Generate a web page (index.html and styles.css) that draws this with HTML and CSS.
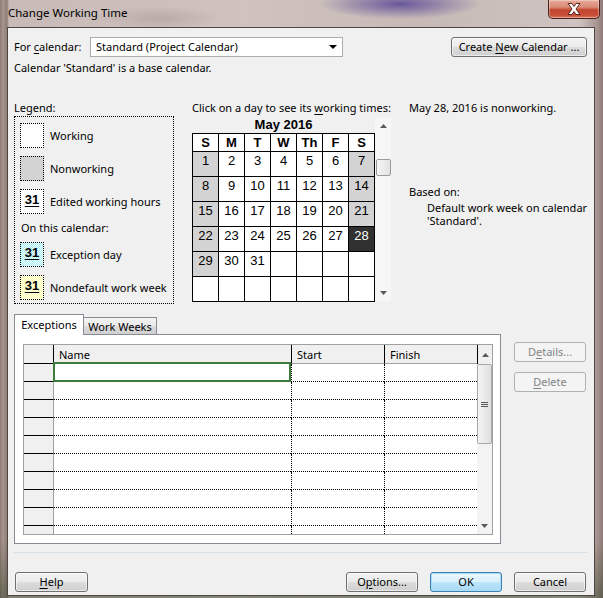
FILE: index.html
```html
<!DOCTYPE html>
<html>
<head>
<meta charset="utf-8">
<title>Change Working Time</title>
<link rel="stylesheet" href="styles.css">
</head>
<body>
<div class="window">
  <div class="titlebar">
    <span class="title">Change Working Time</span>
    <div class="close">
      <svg width="18" height="12" viewBox="0 0 18 12">
        <path d="M3 0.5 L7 0.5 L9 3.5 L11 0.5 L15 0.5 L11 6 L15 11.5 L11 11.5 L9 8.5 L7 11.5 L3 11.5 L7 6 Z" fill="#fff" stroke="#5a2a22" stroke-width="1"/>
      </svg>
    </div>
  </div>
  <div class="client">
    <div class="row1">
      <span class="lbl">For <u>c</u>alendar:</span>
      <div class="combo"><span>Standard (Project Calendar)</span><span class="caret"></span></div>
      <button class="btn create">Create <u>N</u>ew Calendar ...</button>
    </div>
    <div class="note">Calendar 'Standard' is a base calendar.</div>

    <div class="main">
      <div class="legend-col">
        <div class="cap">Legend:</div>
        <div class="legend">
          <div class="item"><span class="sw"></span><span>Working</span></div>
          <div class="item"><span class="sw nonwork"></span><span>Nonworking</span></div>
          <div class="item"><span class="sw"><b>31</b></span><span>Edited working hours</span></div>
          <div class="sub">On this calendar:</div>
          <div class="item"><span class="sw exc"><b>31</b></span><span>Exception day</span></div>
          <div class="item"><span class="sw nondef"><b>31</b></span><span>Nondefault work week</span></div>
        </div>
      </div>

      <div class="cal-col">
        <div class="cap">Click on a day to see its <u>w</u>orking times:</div>
        <div class="cal-wrap">
          <div class="cal">
            <div class="month">May 2016</div>
            <div class="days">
              <div class="hd">S</div><div class="hd">M</div><div class="hd">T</div><div class="hd">W</div><div class="hd">Th</div><div class="hd">F</div><div class="hd">S</div>
              <div class="we">1</div><div>2</div><div>3</div><div>4</div><div>5</div><div>6</div><div class="we">7</div>
              <div class="we">8</div><div>9</div><div>10</div><div>11</div><div>12</div><div>13</div><div class="we">14</div>
              <div class="we">15</div><div>16</div><div>17</div><div>18</div><div>19</div><div>20</div><div class="we">21</div>
              <div class="we">22</div><div>23</div><div>24</div><div>25</div><div>26</div><div>27</div><div class="sel">28</div>
              <div class="we">29</div><div>30</div><div>31</div><div></div><div></div><div></div><div></div>
              <div></div><div></div><div></div><div></div><div></div><div></div><div></div>
            </div>
          </div>
          <div class="cscroll">
            <div class="arr"><svg width="7" height="4" viewBox="0 0 7 4"><path d="M0 4 L3.5 0 L7 4 Z" fill="#5a5a5a"/></svg></div>
            <div class="cthumb"></div>
            <div class="ctrack"></div>
            <div class="arr"><svg width="7" height="4" viewBox="0 0 7 4"><path d="M0 0 L7 0 L3.5 4 Z" fill="#5a5a5a"/></svg></div>
          </div>
        </div>
      </div>

      <div class="info-col">
        <div class="cap">May 28, 2016 is nonworking.</div>
        <div class="based">Based on:</div>
        <div class="based-txt">
          <div>Default work week on calendar</div>
          <div>'Standard'.</div>
        </div>
      </div>
    </div>

    <div class="lower">
      <div class="tabs-col">
        <div class="tabs">
          <div class="tab active">Exceptions</div>
          <div class="tab">Work Weeks</div>
        </div>
        <div class="panel">
          <div class="xgrid">
            <div class="xtable">
              <div class="hc rhh"></div><div class="hc">Name</div><div class="hc">Start</div><div class="hc">Finish</div>
              <div class="rh"></div><div class="c name sel"></div><div class="c dl"></div><div class="c dl"></div>
              <div class="rh"></div><div class="c name"></div><div class="c dl"></div><div class="c dl"></div>
              <div class="rh"></div><div class="c name"></div><div class="c dl"></div><div class="c dl"></div>
              <div class="rh"></div><div class="c name"></div><div class="c dl"></div><div class="c dl"></div>
              <div class="rh"></div><div class="c name"></div><div class="c dl"></div><div class="c dl"></div>
              <div class="rh"></div><div class="c name"></div><div class="c dl"></div><div class="c dl"></div>
              <div class="rh"></div><div class="c name"></div><div class="c dl"></div><div class="c dl"></div>
              <div class="rh"></div><div class="c name"></div><div class="c dl"></div><div class="c dl"></div>
              <div class="rh"></div><div class="c name"></div><div class="c dl"></div><div class="c dl"></div>
              <div class="rh"></div><div class="c name"></div><div class="c dl"></div><div class="c dl"></div>
            </div>
            <div class="xscroll">
              <div class="xup"><svg width="7" height="4" viewBox="0 0 7 4"><path d="M0 4 L3.5 0 L7 4 Z" fill="#5a5a5a"/></svg></div>
              <div class="xthumb"><span class="grip"></span></div>
              <div class="xtrack"></div>
              <div class="xdown"><svg width="7" height="4" viewBox="0 0 7 4"><path d="M0 0 L7 0 L3.5 4 Z" fill="#5a5a5a"/></svg></div>
            </div>
          </div>
        </div>
      </div>
      <div class="side">
        <button class="btn dis">D<u>e</u>tails...</button>
        <button class="btn dis"><u>D</u>elete</button>
      </div>
    </div>

    <div class="sep"></div>

    <div class="bottom">
      <button class="btn help"><u>H</u>elp</button>
      <button class="btn">O<u>p</u>tions...</button>
      <button class="btn ok">OK</button>
      <button class="btn">Cancel</button>
    </div>
  </div>
</div>
</body>
</html>
```

FILE: styles.css
```css
html, body {
  margin: 0;
  padding: 0;
  background: #2b2b2b;
}

.window {
  width: 603px;
  height: 598px;
  display: flex;
  flex-direction: column;
  overflow: hidden;
  font-family: "Noto Sans", "Open Sans", sans-serif;
  font-size: 11px;
  color: #000;
  background:
    radial-gradient(ellipse 80px 15px at 400px 4px, rgba(88, 70, 150, 0.85), rgba(88, 70, 150, 0) 100%),
    radial-gradient(ellipse 60px 12px at 160px 18px, rgba(150, 130, 125, 0.35), rgba(150, 130, 125, 0) 100%),
    linear-gradient(180deg, rgba(0,0,0,0) 0, rgba(0,0,0,0) 540px, rgba(40,60,30,0.45) 598px),
    linear-gradient(90deg, #8d7a76 0, #a8958f 3px, #8f7d79 7px, #c8bab6 9px, #cfc2bf 40%, #c6b9b6 70%, #cfc4c1 96%, #a89591 99%, #8d7a76 100%);
}

/* ---------- title bar ---------- */
.titlebar {
  height: 27px;
  display: flex;
  align-items: flex-start;
  padding-left: 8px;
  box-sizing: border-box;
}
.title {
  margin-top: 5px;
  line-height: 16px;
  font-size: 11.5px;
  color: #000;
}
.close {
  margin-left: auto;
  margin-right: 3px;
  width: 52px;
  height: 19px;
  box-sizing: border-box;
  border: 1px solid #4a1f18;
  border-top: none;
  border-radius: 0 0 5px 5px;
  background: linear-gradient(180deg, #e8a898 0%, #d98a76 40%, #c4452f 55%, #c84f38 85%, #dc7a60 100%);
  display: flex;
  align-items: center;
  justify-content: center;
  box-shadow: inset 0 0 0 1px rgba(255,255,255,0.35);
}

/* ---------- client ---------- */
.client {
  flex: 1;
  margin: 0 8px 2px 7px;
  border: 1px solid #4e4644;
  background: #f0f0f0;
  padding: 9px 7px 0 6px;
  display: flex;
  flex-direction: column;
  min-height: 0;
}

u { text-decoration: underline; text-underline-offset: 2px; }

.row1 {
  display: flex;
  align-items: center;
  height: 20px;
}
.lbl {
  width: 76px;
  line-height: 16px;
}
.combo {
  box-sizing: border-box;
  width: 253px;
  height: 20px;
  border: 1px solid #abadb3;
  background: #fff;
  display: flex;
  align-items: center;
  padding: 0 5px 0 5px;
  line-height: 16px;
}
.combo span:first-child { flex: 1; }
.caret {
  width: 0;
  height: 0;
  border-left: 4px solid transparent;
  border-right: 4px solid transparent;
  border-top: 4px solid #000;
}

.btn {
  box-sizing: border-box;
  height: 20px;
  width: 72px;
  padding: 0;
  margin: 0;
  border: 1px solid #707070;
  border-radius: 3px;
  background: linear-gradient(180deg, #f2f2f2 0%, #ebebeb 50%, #dddddd 50%, #cfcfcf 100%);
  font-family: inherit;
  font-size: 11px;
  color: #000;
  line-height: 16px;
  box-shadow: inset 0 0 0 1px rgba(255,255,255,0.6);
}
.btn.create {
  margin-left: auto;
  width: 136px;
}
.btn.dis {
  border-color: #adb2b5;
  background: #f4f4f4;
  color: #838383;
  box-shadow: none;
}
.btn.ok {
  border-color: #3c7fb1;
  background: linear-gradient(180deg, #eaf6fd 0%, #d9f0fc 50%, #bee6fd 50%, #a7d9f5 100%);
  box-shadow: inset 0 0 0 1px #a8dcf6;
}
.btn.help { width: 73px; margin-right: auto; }

.note {
  margin-top: 3px;
  line-height: 16px;
}

/* ---------- main ---------- */
.main {
  margin-top: 23px;
  display: grid;
  grid-template-columns: 160px 199px 1fr;
  column-gap: 18px;
}
.cap {
  line-height: 17px;
  white-space: nowrap;
}

.legend {
  box-sizing: border-box;
  height: 188px;
  border: 1px dotted #000;
  padding: 6px 5px 0 5px;
  display: flex;
  flex-direction: column;
  gap: 8px;
}
.item {
  display: flex;
  align-items: center;
  gap: 6px;
  height: 25px;
  line-height: 16px;
  white-space: nowrap;
}
.sw {
  box-sizing: border-box;
  width: 24px;
  height: 25px;
  border: 1px dotted #000;
  background: #fff;
  display: flex;
  justify-content: center;
  flex: none;
}
.sw b {
  font-family: "Liberation Sans", Arial, sans-serif;
  font-size: 13px;
  line-height: 15px;
  margin-top: 2px;
  text-decoration: underline;
  text-underline-offset: 2px;
  text-decoration-thickness: 1px;
}
.sw.nonwork { background: #d3d3d3; }
.sw.exc {
  background: repeating-conic-gradient(#a8ecf4 0 25%, #effdfe 0 50%) 0 0 / 2px 2px;
}
.sw.nondef {
  background: repeating-conic-gradient(#fbfbb0 0 25%, #ffffea 0 50%) 0 0 / 2px 2px;
}
.sub {
  line-height: 12px;
  height: 12px;
  padding-left: 1px;
  white-space: nowrap;
}

/* calendar */
.cal-wrap {
  display: flex;
  align-items: flex-start;
}
.cal { width: 183px; }
.month {
  height: 17px;
  line-height: 17px;
  text-align: center;
  font-family: "Liberation Sans", Arial, sans-serif;
  font-weight: bold;
  font-size: 13px;
}
.days {
  display: grid;
  grid-template-columns: repeat(7, 25px);
  grid-template-rows: 17px repeat(6, 24px);
  gap: 1px;
  background: #000;
  border: 1px solid #000;
  width: max-content;
}
.days > div {
  background: #fff;
  text-align: center;
  font-family: "Liberation Sans", Arial, sans-serif;
  font-size: 13px;
  line-height: 16px;
  padding-top: 1px;
}
.days > .hd {
  font-weight: bold;
  padding-top: 0;
  line-height: 17px;
}
.days > .we { background: #d3d3d3; }
.days > .sel { background: #303030; color: #fff; }

.cscroll {
  width: 16px;
  height: 184px;
  margin-top: 1px;
  background: #f6f6f6;
  display: flex;
  flex-direction: column;
  align-items: center;
}
.cscroll .arr {
  height: 17px;
  display: flex;
  align-items: center;
  justify-content: center;
}
.cthumb {
  box-sizing: border-box;
  width: 15px;
  height: 17px;
  margin-top: 25px;
  border: 1px solid #9a9a9a;
  border-radius: 2px;
  background: linear-gradient(90deg, #f6f6f6, #e2e2e2);
}
.ctrack { flex: 1; }

.info-col { line-height: 16px; }
.based {
  margin-top: 68px;
  line-height: 16px;
}
.based-txt {
  padding-left: 18px;
  line-height: 13px;
  margin-top: 1px;
  white-space: nowrap;
}
.based-txt div { height: 13px; }

/* ---------- lower ---------- */
.lower {
  margin-top: 10px;
  display: flex;
}
.tabs-col { width: 487px; }
.tabs {
  display: flex;
  align-items: flex-end;
  height: 20px;
}
.tab {
  box-sizing: border-box;
  border: 1px solid #898c95;
  border-bottom: none;
  text-align: center;
  line-height: 15px;
}
.tab.active {
  width: 70px;
  height: 21px;
  margin-bottom: -1px;
  background: #fff;
  position: relative;
  z-index: 1;
  padding-top: 2px;
}
.tab:not(.active) {
  width: 73px;
  height: 17px;
  border-left: none;
  background: linear-gradient(180deg, #f2f2f2 0%, #ebebeb 50%, #dddddd 50%, #cfcfcf 100%);
  padding-top: 1px;
}
.panel {
  box-sizing: border-box;
  height: 210px;
  border: 1px solid #898c95;
  background: #fff;
  padding: 9px 7px 0 8px;
}
.xgrid {
  box-sizing: border-box;
  width: 470px;
  height: 191px;
  border: 1px solid #a0a0a0;
  display: flex;
  overflow: hidden;
}
.xtable {
  display: grid;
  grid-template-columns: 29px 238px 93px 93px;
  grid-template-rows: 19px;
  grid-auto-rows: 18px;
  align-content: start;
}
.xtable > div { box-sizing: border-box; }
.hc {
  background: #f0f0f0;
  border-bottom: 1px solid #a0a0a0;
  border-left: 1px solid #000;
  padding: 2px 0 0 5px;
  line-height: 16px;
}
.hc.rhh {
  border-left: none;
  border-bottom: 1px solid #000;
}
.rh {
  background: #f0f0f0;
  border-bottom: 1px solid #000;
}
.c { border-bottom: 1px dotted #000; background: #fff; }
.c.name { border-left: 1px solid #a0a0a0; }
.c.dl { border-left: 1px dotted #000; }
.c.sel { position: relative; }
.c.sel::after {
  content: "";
  position: absolute;
  left: -1px;
  top: -2px;
  right: 0;
  bottom: -1px;
  border: 2px solid #3c7b3c;
}
.xscroll {
  width: 15px;
  display: flex;
  flex-direction: column;
  background: #f3f3f3;
}
.xup {
  box-sizing: border-box;
  height: 19px;
  border-left: 1px solid #000;
  background: #f0f0f0;
  display: flex;
  align-items: center;
  justify-content: center;
}
.xthumb {
  box-sizing: border-box;
  height: 80px;
  border: 1px solid #a8a8a8;
  border-radius: 2px;
  background: linear-gradient(90deg, #f4f4f4, #e0e0e0);
  display: flex;
  align-items: center;
  justify-content: center;
}
.grip {
  width: 7px;
  height: 5px;
  border-top: 1px solid #555;
  border-bottom: 1px solid #555;
  box-sizing: border-box;
  background: linear-gradient(#555, #555) center / 7px 1px no-repeat;
}
.xtrack { flex: 1; }
.xdown {
  height: 17px;
  display: flex;
  align-items: center;
  justify-content: center;
}

.side {
  margin-left: 13px;
  padding-top: 28px;
  display: flex;
  flex-direction: column;
  gap: 10px;
}

.sep {
  margin-top: 8px;
  height: 1px;
  background: #d5dfe5;
}

.bottom {
  margin-top: 19px;
  display: flex;
  gap: 12px;
  padding: 0 1px;
}
```
